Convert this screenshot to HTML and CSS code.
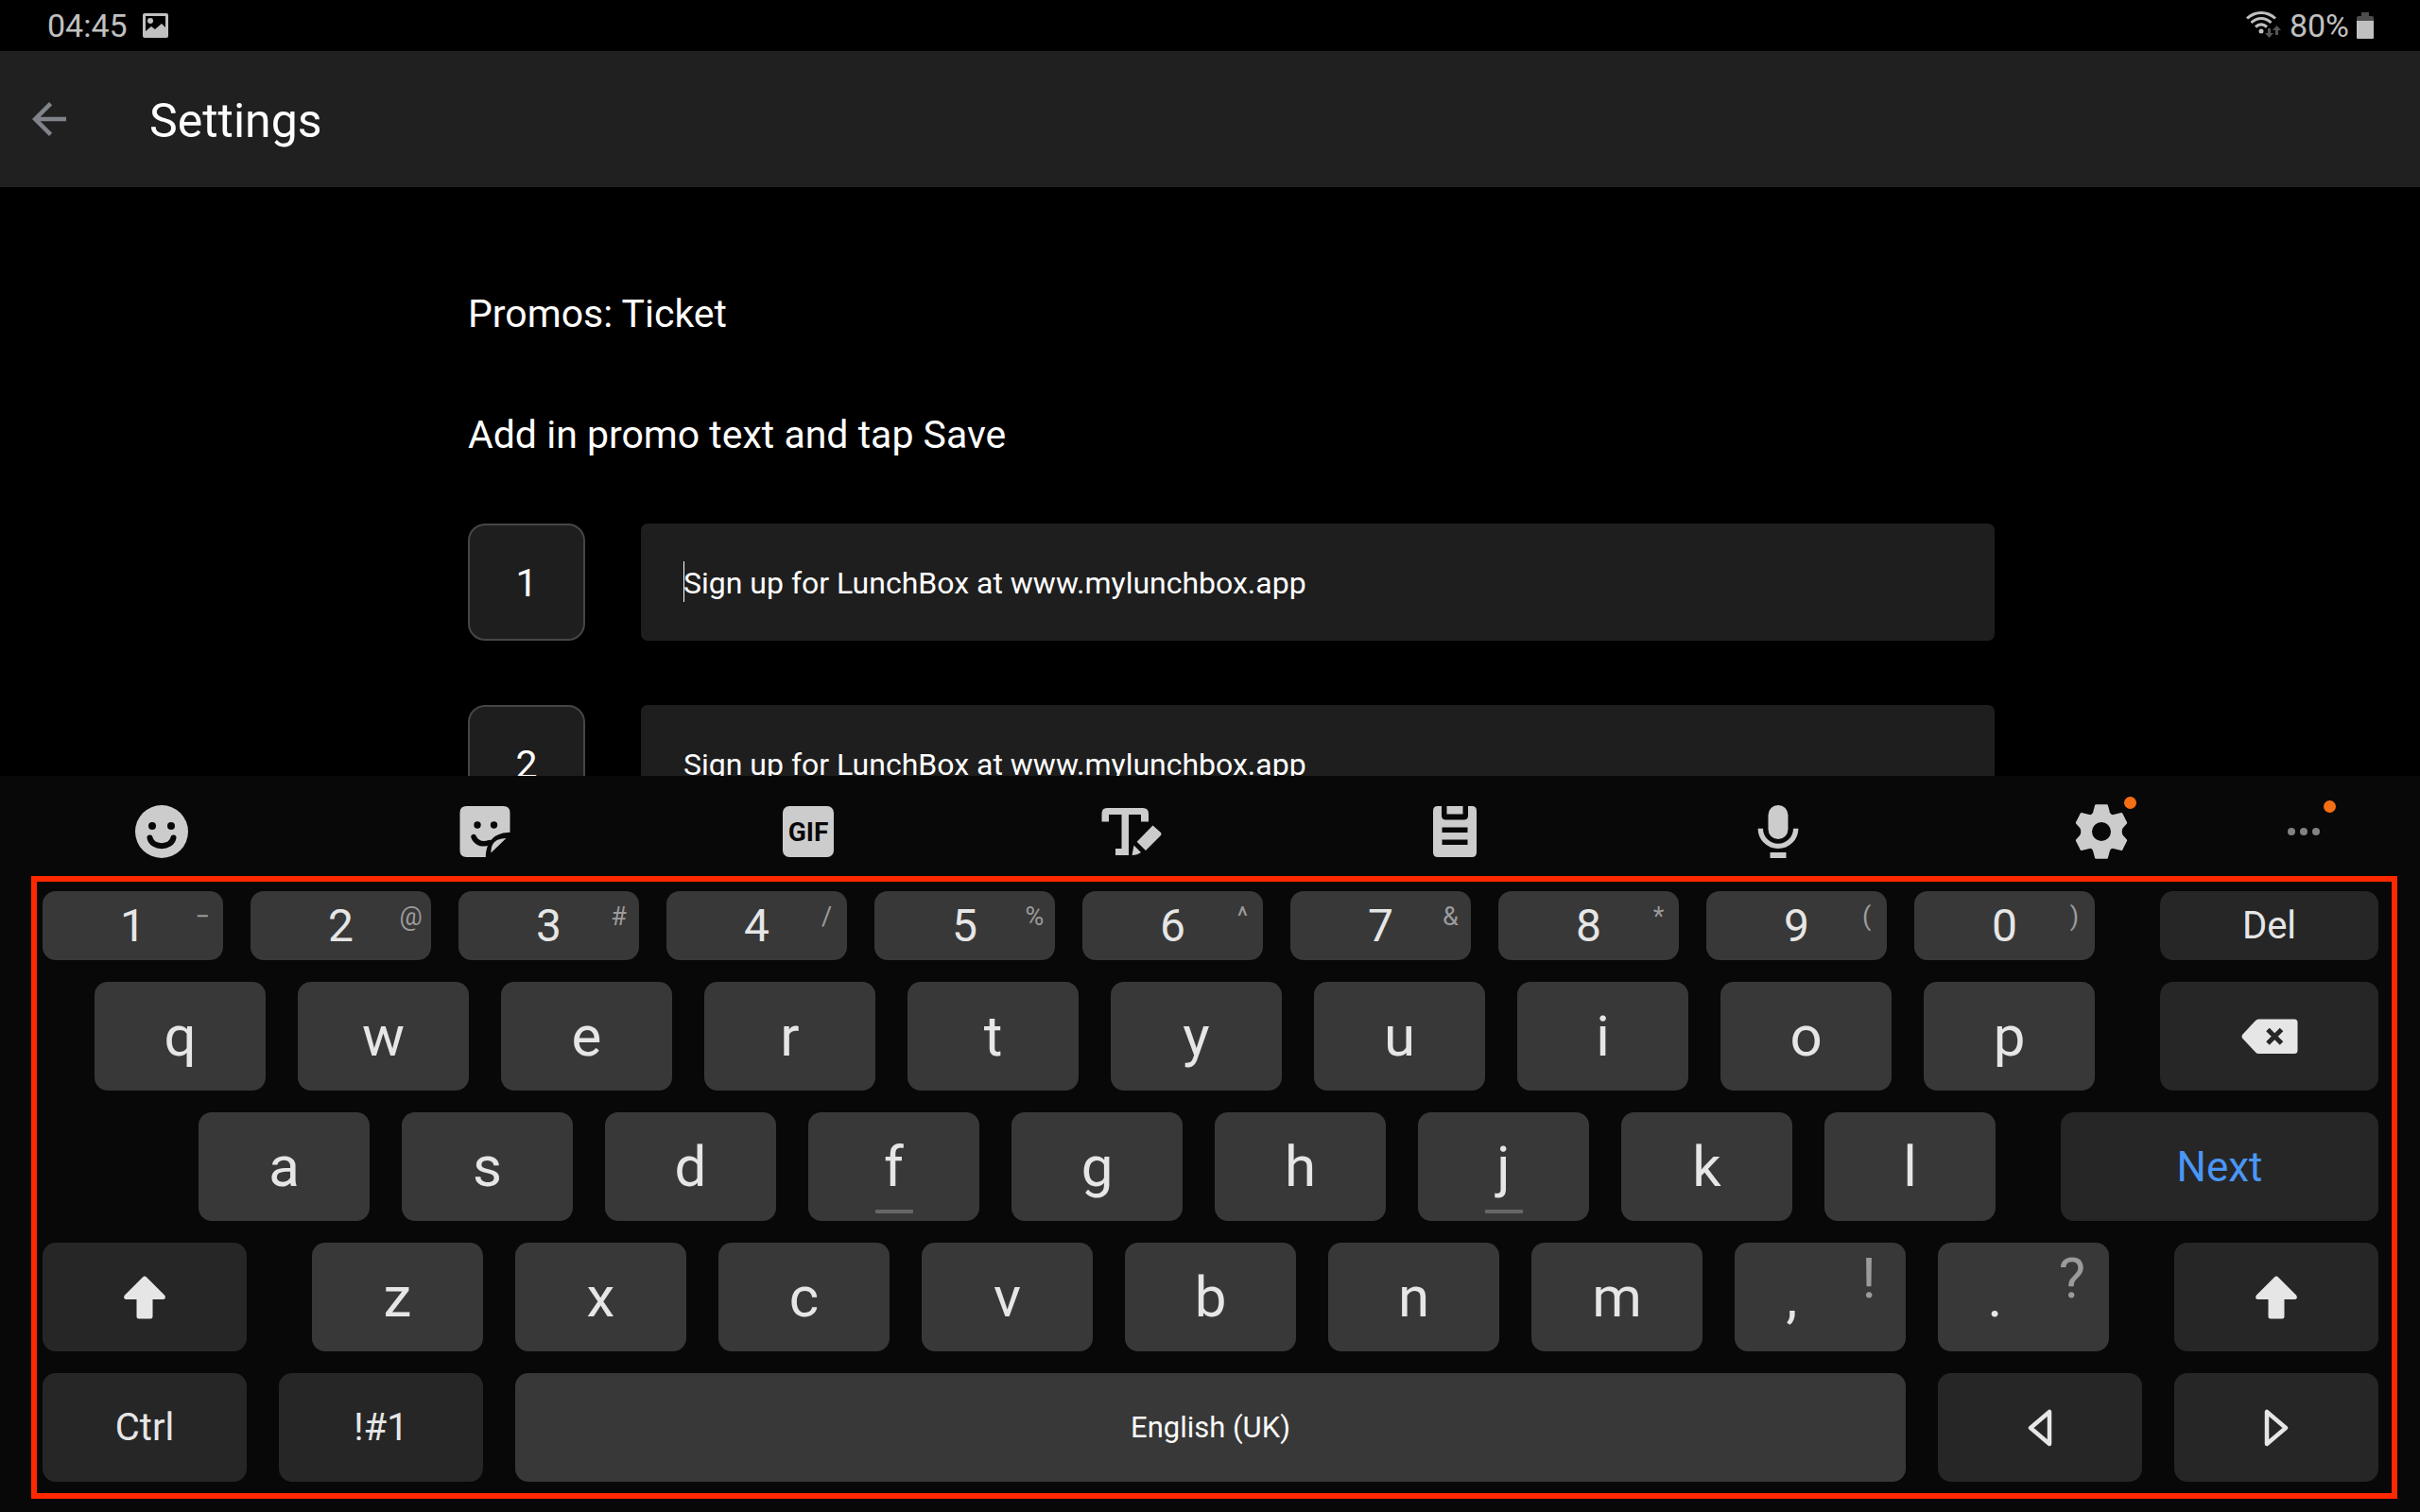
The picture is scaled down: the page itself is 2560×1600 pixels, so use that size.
FILE: index.html
```html
<!DOCTYPE html>
<html lang="en">
<head>
  <meta charset="UTF-8" />
  <meta name="viewport" content="width=device-width, initial-scale=1.0"/>
  <title>Settings</title>
  <link rel="stylesheet" href="styles.css">
</head>
<body>

  <div class="status-bar">
    <span>04:45</span>
    <svg class="status-picture" width="27" height="26" viewBox="0 0 27 26">
      <path fill-rule="evenodd" fill="#c0c0c0" d="M2 0h23a2 2 0 0 1 2 2v22a2 2 0 0 1-2 2H2a2 2 0 0 1-2-2V2a2 2 0 0 1 2-2zM3 3v16l6-5 4 3 7-6 4 4V3z"/>
      <circle cx="8" cy="8" r="3" fill="#c0c0c0"/>
    </svg>
    <div class="status-right">
      <svg width="38" height="30" viewBox="0 0 38 30">
        <g fill="none" stroke="#c0c0c0" stroke-width="3">
          <path d="M1 7.500C10 -.500 22 -.500 31 7.500"/>
          <path d="M5.500 12C12 6 20 6 26.500 12"/>
          <path d="M10 16.500C14 13 18 13 22 16.500"/>
        </g>
        <circle cx="16" cy="21" r="2.500" fill="#c0c0c0"/>
        <path fill="#555" d="M23 18h3v5h3l-4.500 5L20 23h3zM31 25h3v-5h3l-4.500-5L28 20h3z"/>
      </svg>
      <span>80%</span>
      <svg width="18" height="28" viewBox="0 0 18 28">
        <path d="M5 0h8v4h3a2 2 0 0 1 2 2v3H0V6a2 2 0 0 1 2-2h3z" fill="#4d4d4d"/>
        <path d="M0 9h18v18a1 1 0 0 1-1 1H1a1 1 0 0 1-1-1z" fill="#c0c0c0"/>
      </svg>
    </div>
  </div>

  <header class="app-bar">
    <button class="back-btn" aria-label="Back">
      <svg width="54" height="54" viewBox="0 0 24 24"><path fill="#80838a" d="M20 11H7.830l5.590-5.590L12 4l-8 8 8 8 1.410-1.410L7.830 13H20v-2z"/></svg>
    </button>
    <h1>Settings</h1>
  </header>

  <main class="content">
    <h2>Promos: Ticket</h2>
    <p class="help">Add in promo text and tap Save</p>
    <div class="promo">
      <label class="promo-no" for="promo1">1</label>
      <div class="field focused">
        <input type="text" id="promo1" value="Sign up for LunchBox at www.mylunchbox.app">
      </div>
    </div>
    <div class="promo">
      <label class="promo-no" for="promo2">2</label>
      <div class="field">
        <input type="text" id="promo2" value="Sign up for LunchBox at www.mylunchbox.app">
      </div>
    </div>
  </main>

  <section class="keyboard">
    <div class="toolbar">
      <button class="tool" aria-label="Emoji">
        <svg class="tool-icon" viewBox="0 0 64 64">
          <circle cx="32" cy="32" r="28" fill="#ccc"/>
          <circle cx="22" cy="26" r="4" fill="#080808"/>
          <circle cx="42" cy="26" r="4" fill="#080808"/>
          <path d="M19.500 38.500C22 50 42 50 44.500 38.500" fill="none" stroke="#080808" stroke-width="6" stroke-linecap="round"/>
        </svg>
      </button>
      <button class="tool" aria-label="Stickers">
        <svg class="tool-icon" viewBox="0 0 64 64">
          <path fill="#ccc" d="M12.500 5H51.500Q58.500 5 58.500 12V32.700C45 33 33.500 39 32.800 59H12.500Q5.500 59 5.500 52V12Q5.500 5 12.500 5z"/>
          <path fill="#ccc" d="M54.500 39L38.400 54.500C38.500 46 41 39.500 54.500 39z"/>
          <circle cx="24" cy="25" r="3.700" fill="#080808"/>
          <circle cx="41.500" cy="25" r="3.700" fill="#080808"/>
          <path d="M20 37.500C22 43 28 47 37 43.500" fill="none" stroke="#080808" stroke-width="5.500" stroke-linecap="round"/>
        </svg>
      </button>
      <button class="tool" aria-label="GIF">
        <svg class="tool-icon" viewBox="0 0 64 64">
          <rect x="5" y="5" width="54" height="54" rx="7" fill="#ccc"/>
          <text class="gif-text" x="32" y="42" text-anchor="middle">GIF</text>
        </svg>
      </button>
      <button class="tool" aria-label="Text editing">
        <svg class="tool-icon" viewBox="0 0 64 64">
          <path fill="#ccc" d="M6 7H44Q50 7 50 13V21.500H42V14H29V57H15V50H21.500V14H8V21.500H.500V13Q.500 7 6 7z"/>
          <path fill="#ccc" d="M54.500 25.500L63 33Q64 34.500 63 36L47 52L37.600 42.700zM34.500 46.500L42 54Q38 57 32.500 57z"/>
        </svg>
      </button>
      <button class="tool" aria-label="Clipboard">
        <svg class="tool-icon" viewBox="0 0 64 64">
          <path fill="#ccc" fill-rule="evenodd" d="M14 5H18V15Q18 19.500 22.500 19.500H41.500Q46 19.500 46 15V5H50Q55 5 55 10V54Q55 59 50 59H14Q9 59 9 54V10Q9 5 14 5zM18.500 27.500V33H45.500V27.500zM18.500 40.500V46H45.500V40.500z"/>
          <rect x="23.500" y="5" width="17" height="8.500" fill="#ccc"/>
        </svg>
      </button>
      <button class="tool" aria-label="Voice input">
        <svg class="tool-icon" viewBox="0 0 64 64">
          <rect x="21.500" y="4" width="21" height="36" rx="10.500" fill="#ccc"/>
          <path d="M13.300 28.700a18.700 18.700 0 0 0 37.400 0" fill="none" stroke="#ccc" stroke-width="5.400"/>
          <rect x="23.500" y="54" width="17" height="6" fill="#ccc"/>
        </svg>
      </button>
      <button class="tool" aria-label="Keyboard settings">
        <span class="tool-badge">
          <svg class="tool-icon" viewBox="0 0 64 64">
            <path fill="#ccc" stroke="#ccc" stroke-width="2" stroke-linejoin="round" fill-rule="evenodd" d="M26.100 4.300H37.900L40 12Q41.500 15.800 45 15L53.300 13L58.200 22.800L53.900 27.500Q51.500 32 53.900 36.500L58.200 41.200L53.300 51L45 49Q41.500 48.200 40 52L37.900 59.700H26.100L24 52Q22.500 48.200 19 49L10.700 51L5.800 41.200L10.100 36.500Q12.500 32 10.100 27.500L5.800 22.800L10.700 13L19 15Q22.500 15.800 24 12zM32 21a11 11 0 1 0 0 22a11 11 0 1 0 0-22z"/>
          </svg>
        </span>
      </button>
      <button class="tool tool-more" aria-label="More">
        <span class="tool-badge">
          <svg class="tool-icon" viewBox="0 0 64 64" fill="#828282">
            <circle cx="19" cy="32" r="4"/>
            <circle cx="32" cy="32" r="4"/>
            <circle cx="45" cy="32" r="4"/>
          </svg>
        </span>
      </button>
    </div>

    <div class="keys">
      <div class="row row-numbers">
        <button class="key">1<span class="hint">−</span></button>
        <button class="key">2<span class="hint">@</span></button>
        <button class="key">3<span class="hint">#</span></button>
        <button class="key">4<span class="hint">/</span></button>
        <button class="key">5<span class="hint">%</span></button>
        <button class="key">6<span class="hint">^</span></button>
        <button class="key">7<span class="hint">&amp;</span></button>
        <button class="key">8<span class="hint">*</span></button>
        <button class="key">9<span class="hint">(</span></button>
        <button class="key">0<span class="hint">)</span></button>
        <button class="key fn del after-gap-wide">Del</button>
      </div>

      <div class="row row-top">
        <button class="key">q</button>
        <button class="key">w</button>
        <button class="key">e</button>
        <button class="key">r</button>
        <button class="key">t</button>
        <button class="key">y</button>
        <button class="key">u</button>
        <button class="key">i</button>
        <button class="key">o</button>
        <button class="key">p</button>
        <button class="key fn del after-gap" aria-label="Backspace">
          <svg width="60" height="38" viewBox="0 0 60 38">
            <path fill="#e6e6e6" d="M18 .500H56Q59.500 .500 59.500 4V33.500Q59.500 37 56 37H18Q16.500 37 15 35.500L1 20.500Q0 19 1 17L15 2Q16.500 .500 18 .500z"/>
            <path d="M28 11.500l14.500 14.500M42.500 11.500l-14.500 14.500" stroke="#262626" stroke-width="5"/>
          </svg>
        </button>
      </div>

      <div class="row row-home">
        <button class="key">a</button>
        <button class="key">s</button>
        <button class="key">d</button>
        <button class="key bump">f</button>
        <button class="key">g</button>
        <button class="key">h</button>
        <button class="key bump">j</button>
        <button class="key">k</button>
        <button class="key">l</button>
        <button class="key fn next after-gap">Next</button>
      </div>

      <div class="row">
        <button class="key fn mod before-gap" aria-label="Shift">
          <svg width="44" height="46" viewBox="0 0 44 46"><path fill="#e6e6e6" d="M20 1.500Q22 -.500 24 1.500L43 20.500Q44.500 22.500 43.500 24Q43 25 41.500 25H30.500V43Q30.500 45.500 28 45.500H16Q13.500 45.500 13.500 43V25H2.500Q1 25 .500 24Q-.500 22.500 1 20.500z"/></svg>
        </button>
        <button class="key">z</button>
        <button class="key">x</button>
        <button class="key">c</button>
        <button class="key">v</button>
        <button class="key">b</button>
        <button class="key">n</button>
        <button class="key">m</button>
        <button class="key punct"><span class="mark">,</span><span class="hint">!</span></button>
        <button class="key punct"><span class="mark">.</span><span class="hint">?</span></button>
        <button class="key fn mod after-gap" aria-label="Shift">
          <svg width="44" height="46" viewBox="0 0 44 46"><path fill="#e6e6e6" d="M20 1.500Q22 -.500 24 1.500L43 20.500Q44.500 22.500 43.500 24Q43 25 41.500 25H30.500V43Q30.500 45.500 28 45.500H16Q13.500 45.500 13.500 43V25H2.500Q1 25 .500 24Q-.500 22.500 1 20.500z"/></svg>
        </button>
      </div>

      <div class="row">
        <button class="key fn mod">Ctrl</button>
        <button class="key fn mod">!#1</button>
        <button class="key space">English (UK)</button>
        <button class="key fn mod" aria-label="Left">
          <svg width="26" height="40" viewBox="0 0 26 40"><path d="M23 3V37L3 20z" fill="none" stroke="#e6e6e6" stroke-width="4.500" stroke-linejoin="round"/></svg>
        </button>
        <button class="key fn mod" aria-label="Right">
          <svg width="26" height="40" viewBox="0 0 26 40"><path d="M3 3V37L23 20z" fill="none" stroke="#e6e6e6" stroke-width="4.500" stroke-linejoin="round"/></svg>
        </button>
      </div>
    </div>
  </section>

</body>
</html>
```
FILE: styles.css
```css
* { box-sizing: border-box; }
body {
  margin: 0;
  height: 100vh;
  display: flex;
  flex-direction: column;
  overflow: hidden;
  background-color: #000;
  color: #fff;
  font-family: Roboto, sans-serif;
}
button, input {
  font-family: inherit;
  color: inherit;
  border: none;
  padding: 0;
}
button {
  background: none;
  cursor: pointer;
}
svg { display: block; }

/* status bar */
.status-bar {
  display: flex;
  align-items: center;
  height: 54px;
  padding: 0 49px 0 50px;
  font-size: 34px;
  line-height: 40px;
  color: #c0c0c0;
}
.status-picture { margin-left: 16px; }
.status-right {
  display: flex;
  align-items: center;
  gap: 8px;
  margin-left: auto;
}

/* app bar */
.app-bar {
  display: flex;
  align-items: center;
  gap: 79px;
  height: 144px;
  padding-left: 25px;
  background-color: #202020;
}
.app-bar h1 {
  margin: 0;
  padding-top: 4px;
  font-size: 50px;
  font-weight: 400;
}

/* promo form */
.content {
  flex: 1;
  min-height: 0;
  overflow: hidden;
  padding: 110px 450px 0 495px;
}
.content h2, .help {
  margin: 0;
  font-size: 41px;
  font-weight: 400;
  line-height: 48px;
}
.help { padding: 80px 0 70px; }
.promo {
  display: flex;
  gap: 59px;
  margin-bottom: 68px;
}
.promo-no {
  display: flex;
  align-items: center;
  justify-content: center;
  width: 124px;
  height: 124px;
  padding-top: 2px;
  border: 2px solid #464646;
  border-radius: 18px;
  background-color: #1e1e1e;
  font-size: 41px;
}
.field {
  flex: 1;
  position: relative;
}
.field input {
  width: 100%;
  height: 124px;
  padding: 2px 45px 0;
  border-radius: 7px;
  background-color: #1e1e1e;
  font-size: 32px;
}
/* text cursor */
.focused::before {
  content: "";
  position: absolute;
  left: 45px;
  top: 40px;
  width: 1px;
  height: 43px;
  background-color: #fff;
}

/* keyboard */
.keyboard { background-color: #080808; }
.toolbar {
  display: flex;
  align-items: center;
  height: 106px;
  padding: 12px 80px 0 0;
}
.tool {
  flex: 1;
  display: flex;
  justify-content: center;
}
.tool-more { flex: 0 0 86px; }
.tool-icon {
  width: 64px;
  height: 64px;
}
.gif-text {
  font-size: 28px;
  font-weight: 700;
  fill: #080808;
}
.tool-badge { position: relative; }
.tool-badge::after {
  content: "";
  position: absolute;
  top: -5px;
  right: -5px;
  width: 13px;
  height: 13px;
  border-radius: 50%;
  background-color: #f56e14;
}
.tool-more .tool-badge::after {
  top: -1px;
  right: -2px;
}

.keys {
  display: flex;
  flex-direction: column;
  gap: 23px;
  margin: 0 24px 14px 33px;
  padding: 10px 14px 12px 6px;
  border: 6px solid #ff2800;
}
.row {
  display: flex;
  gap: 34px;
  height: 115px;
}
.row-numbers {
  gap: 29px;
  height: 73px;
}
.row-top { padding-left: 55px; }
.row-home { padding-left: 165px; }

/* grow factors are the relative key widths */
.key {
  flex: 181 1 0;
  display: flex;
  align-items: center;
  justify-content: center;
  position: relative;
  border-radius: 14px;
  background-color: #383838;
  color: #e6e6e6;
  font-size: 60px;
}
.row-numbers .key {
  flex-grow: 191;
  font-size: 48px;
}
.key.fn, .row-numbers .fn {
  background-color: #262626;
  font-size: 40px;
}
.key.del, .row-numbers .del { flex-grow: 231; }
.key.mod { flex-grow: 216; }
.key.next {
  flex-grow: 336;
  color: #4a96f5;
  font-size: 44px;
}
.key.space {
  flex-grow: 1471;
  color: #fafafa;
  font-size: 31px;
}
.after-gap { margin-left: 35px; }
.after-gap-wide { margin-left: 40px; }
.before-gap { margin-right: 35px; }

.hint {
  position: absolute;
  top: 6px;
  right: 0;
  width: 43px;
  font-size: 27px;
  line-height: 42px;
  text-align: center;
  color: #9b9b9b;
}
.mark { padding-right: 60px; }
.punct .hint {
  top: 8px;
  width: 78px;
  font-size: 60px;
  line-height: 60px;
}
.bump::after {
  content: "";
  position: absolute;
  bottom: 8px;
  width: 40px;
  height: 4px;
  border-radius: 1px;
  background-color: #666;
}
```
